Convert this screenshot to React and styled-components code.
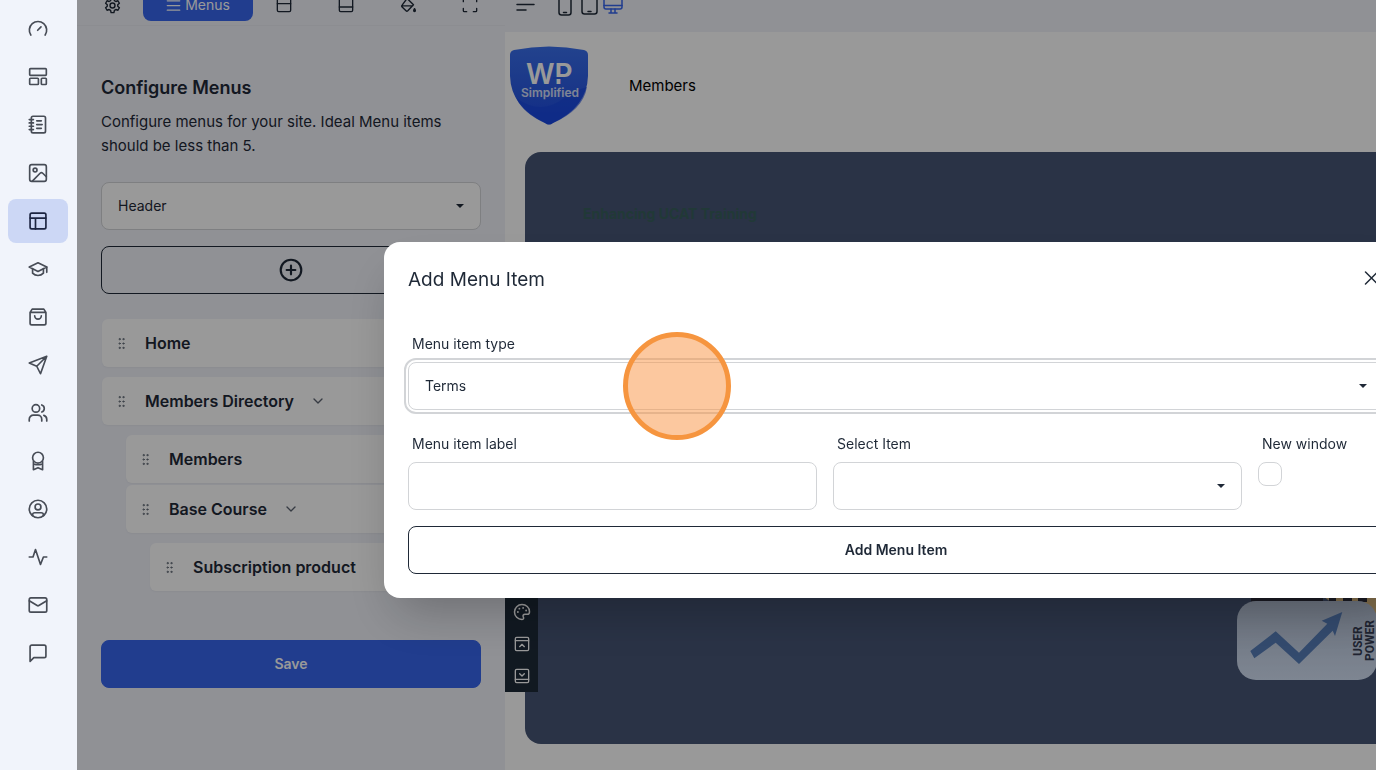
import React from 'react'
import styled, { createGlobalStyle, css } from 'styled-components'
import { GripVertical, ChevronDown } from 'lucide-react'

const GlobalStyle = createGlobalStyle`
  *, *::before, *::after {
    box-sizing: border-box;
  }

  body {
    margin: 0;
    overflow: hidden;
    color: #1f2937;
    background: #f0f2f9;
    font-family: Inter, 'Liberation Sans', sans-serif;
    font-size: 14px;
    line-height: 20px;
  }

  button, input, select {
    font: inherit;
    color: inherit;
  }

  h1, h2, p, ul {
    margin: 0;
    padding: 0;
  }

  ul {
    list-style: none;
  }
`

const Page = styled.div`
  display: flex;
  height: 100vh;
  overflow: hidden;
`

/* Sidebar */

const Sidebar = styled.nav`
  position: relative;
  z-index: 2;
  display: flex;
  flex-direction: column;
  flex: none;
  gap: 4px;
  width: 77px;
  padding: 7px 9px 0 8px;
  background: #f1f4fb;
`

const SidebarLink = styled.a`
  display: flex;
  align-items: center;
  justify-content: center;
  height: 44px;
  border-radius: 8px;
  color: ${({ $active }) => ($active ? '#1c2541' : '#474c56')};
  background: ${({ $active }) => ($active ? '#ccd7f5' : 'transparent')};
`

/* Settings panel */

const Panel = styled.section`
  flex: none;
  width: 428px;
  background: #f0f2f9;
`

const Tabs = styled.div`
  display: flex;
  align-items: flex-end;
  height: 26px;
  padding: 0 4px 4px;
  border-bottom: 1px solid #e9ebf2;
`

const TabButton = styled.button`
  display: flex;
  flex: 1;
  align-items: center;
  justify-content: center;
  height: 32px;
  padding: 0;
  border: 0;
  border-radius: 8px;
  background: none;

  ${({ $active }) => $active && css`
    flex: 0 0 110px;
    gap: 4px;
    color: #fff;
    background: #3766ed;
  `}
`

const PanelBody = styled.div`
  display: flex;
  flex-direction: column;
  padding: 50px 24px 24px;
`

const PanelTitle = styled.h1`
  font-size: 18px;
  line-height: 24px;
  font-weight: 600;
`

const PanelText = styled.p`
  margin: 10px 0 24px;
  font-size: 15px;
  line-height: 24px;
`

const PanelActions = styled.div`
  display: flex;
  flex-direction: column;
  gap: 16px;
`

const Button = styled.button`
  display: flex;
  align-items: center;
  justify-content: center;
  width: 100%;
  height: 48px;
  padding: 0 16px;
  border: 1px solid ${({ $primary }) => ($primary ? '#3766ed' : '#1f2937')};
  border-radius: 8px;
  color: ${({ $primary }) => ($primary ? '#fff' : '#1f2937')};
  background: ${({ $primary }) => ($primary ? '#3766ed' : 'transparent')};
  font-weight: 600;
`

const MenuList = styled.ul`
  display: flex;
  flex-direction: column;
  gap: ${({ $nested }) => ($nested ? '2px' : '10px')};
  padding: ${({ $nested }) => ($nested ? '10px 0 0 24px' : '25px 1px 49px')};
`

const MenuRow = styled.div`
  display: flex;
  align-items: center;
  height: 48px;
  padding: 0 12px;
  border-radius: 6px;
  background: #fff;
  font-size: 16px;
  font-weight: 600;
  box-shadow: 0 1px 2px rgba(0, 0, 0, 0.04);

  svg:first-child {
    margin-right: 16px;
  }

  svg:last-child:not(:first-child) {
    margin-left: 16px;
  }
`

/* Form controls */

const SelectBox = styled.div`
  display: grid;
  align-items: center;

  > * {
    grid-area: 1 / 1;
  }

  &::after {
    content: '';
    grid-area: 1 / 1;
    justify-self: end;
    margin-right: 17px;
    border: 4px solid transparent;
    border-top-color: #1f2937;
    border-bottom-width: 0;
    pointer-events: none;
  }
`

const field = css`
  width: 100%;
  height: 48px;
  padding: 0 16px;
  border: 1px solid #d2d4d7;
  border-radius: 8px;
  background: #fff;
`

const Select = styled.select`
  ${field}
  appearance: none;
  outline: ${({ $focused }) => ($focused ? '2px solid #d2d4d7' : 'none')};
  outline-offset: 2px;
`

const Input = styled.input`
  ${field}
`

const Checkbox = styled.input`
  appearance: none;
  display: block;
  width: 24px;
  height: 24px;
  margin: 0;
  border: 1px solid #d2d4d7;
  border-radius: 8px;
  background: #fff;
`

const Label = styled.label`
  display: block;
  padding: 8px 4px;
`

/* Site preview */

const Preview = styled.main`
  flex: 1;
  min-width: 0;
`

const DeviceBar = styled.div`
  display: flex;
  align-items: flex-end;
  height: 32px;
  padding: 0 10px 16px;
`

const DeviceButton = styled.button`
  display: flex;
  padding: 0;
  border: 0;
  margin-right: ${({ $spaced }) => ($spaced ? '20px' : '0')};
  color: ${({ $active }) => ($active ? '#3766ed' : '#1f2937')};
  background: none;
`

const Canvas = styled.div`
  position: relative;
  height: 100%;
  background: #fff;
`

const SiteHeader = styled.header`
  display: flex;
  align-items: center;
  gap: 40px;
  height: 120px;
  padding: 0 4px 13px;
`

const SiteLink = styled.a`
  color: #000;
  font-size: 15px;
  text-decoration: none;
`

const Hero = styled.div`
  display: flex;
  justify-content: space-between;
  min-height: 592px;
  margin-left: 20px;
  padding: 52px 0 64px 58px;
  border-radius: 16px 0 0 16px;
  background: #465575;
`

const HeroTitle = styled.h2`
  color: #37605c;
  font-size: 14px;
  line-height: 20px;
  font-weight: 700;
`

const HeroPicture = styled.svg`
  flex: none;
  align-self: flex-end;
`

const BlockTools = styled.div`
  position: absolute;
  top: 564px;
  left: 0;
  display: flex;
  flex-direction: column;
  background: #1d2a38;
`

const BlockButton = styled.button`
  display: flex;
  align-items: center;
  justify-content: center;
  width: 33px;
  height: 32px;
  padding: 0;
  border: 0;
  color: #fff;
  background: none;
`

/* Dialog */

const Backdrop = styled.div`
  position: fixed;
  inset: 0;
  z-index: 1;
  display: flex;
  align-items: center;
  padding: 70px 0 0 384px;
  overflow: hidden;
  background: rgba(0, 0, 0, 0.4);
`

const Modal = styled.div`
  position: relative;
  flex: none;
  width: 1024px;
  padding: 24px;
  border-radius: 16px;
  background: #fff;
  box-shadow: 0 25px 50px -12px rgba(0, 0, 0, 0.25);
`

const ModalHeader = styled.div`
  display: flex;
  justify-content: space-between;
  margin-bottom: 32px;
`

const ModalTitle = styled.h2`
  font-size: 19px;
  line-height: 28px;
  font-weight: 400;
`

const CloseButton = styled.button`
  display: flex;
  align-items: center;
  justify-content: center;
  width: 24px;
  height: 24px;
  padding: 0;
  border: 0;
  background: none;
`

const FieldRow = styled.div`
  display: grid;
  grid-template-columns: 1fr 1fr 126px;
  gap: 16px;
  margin: 16px 0;
`

const ClickMarker = styled.span`
  position: absolute;
  top: 90px;
  left: 239px;
  width: 108px;
  height: 108px;
  border: 5px solid #f6953f;
  border-radius: 50%;
  background: rgba(249, 146, 64, 0.5);
  pointer-events: none;
`

const Icon = ({ size = 20, stroke = 2, children }) => (
  <svg
    width={size}
    height={size}
    viewBox='0 0 24 24'
    fill='none'
    stroke='currentColor'
    strokeWidth={stroke}
    strokeLinecap='round'
    strokeLinejoin='round'
    aria-hidden='true'
  >
    {children}
  </svg>
)

const sidebarItems = [
  { label: 'Dashboard', icon: <path d='M3.4 19.2A10.4 10.4 0 1 1 20.6 19.2M11.6 13.500l4-4' /> },
  {
    label: 'Templates',
    icon: <><rect x='2' y='2' width='20' height='8' rx='1' /><rect x='2' y='13.5' width='10.5' height='7.5' rx='1' /><rect x='16' y='13.5' width='6' height='7.5' rx='1' /></>
  },
  {
    label: 'Posts',
    icon: <><rect x='4' y='1.5' width='17' height='20' rx='2' /><path d='M1.5 5.500h5M1.5 9.500h5M1.5 13.500h5M1.5 17.500h5M10.5 7H16M10.5 11.500H17M10.5 16H16' /></>
  },
  {
    label: 'Media',
    icon: <><rect x='2' y='2' width='20' height='20' rx='2.5' /><circle cx='8.5' cy='8.5' r='2.3' /><path d='M5.5 21.5l9-9.2c1-.9 2.2-.9 3.2 0L22 16.5' /></>
  },
  {
    label: 'Site builder',
    active: true,
    icon: <><rect x='2.5' y='2.5' width='19' height='19' rx='2' /><path d='M2.5 8.5h19M9 8.5v13' /></>
  },
  {
    label: 'Courses',
    icon: <><path d='M12 4.5L1.5 9.7 12 15l10.5-5.3z' /><path d='M5.5 12v5c3.5 3.7 9.5 3.7 13 0v-5M22.5 9.7V16' /></>
  },
  {
    label: 'Store',
    icon: <><path d='M2.5 6.5L5 2.5h14l2.5 4v13a2 2 0 0 1-2 2h-15a2 2 0 0 1-2-2zM2.5 6.5h19' /><path d='M16 10.5a4 4 0 0 1-8 0' /></>
  },
  { label: 'Campaigns', icon: <path d='M22.5 1.5L1.5 9.5l9 4L15 22.5zM22.5 1.5l-12 12' /> },
  {
    label: 'Members',
    icon: <><circle cx='9.5' cy='6.5' r='4.5' /><path d='M1.5 21.5v-2a5 5 0 0 1 5-5h5a5 5 0 0 1 5 5v2M16.5 2.3a4.5 4.5 0 0 1 0 8.5M19 14.8a5 5 0 0 1 3.5 4.7v2' /></>
  },
  {
    label: 'Badges',
    icon: <><circle cx='12' cy='8' r='6.5' /><path d='M6.500 12.500v10l5.500-2.500 5.500 2.500v-10M7 15.500c2.500 1 7.500 1 10 0' /></>
  },
  {
    label: 'Account',
    icon: <><circle cx='12' cy='12' r='10.5' /><circle cx='12' cy='9.5' r='3.500' /><path d='M5.500 20v-1c0-1.500 1.200-2.500 2.700-2.500h7.600c1.500 0 2.700 1 2.700 2.500v1' /></>
  },
  { label: 'Activity', icon: <path d='M1.5 12H6L9 3l6 18 3.5-9h4' /> },
  {
    label: 'Mail',
    icon: <><rect x='1.5' y='3.5' width='21' height='17' rx='2' /><path d='M1.5 7l9.5 5.600c.6.400 1.400.400 2 0L22.500 7' /></>
  },
  { label: 'Comments', icon: <path d='M2.500 22V4.500a2 2 0 0 1 2-2h15a2 2 0 0 1 2 2v11a2 2 0 0 1-2 2H7z' /> }
]

const tabItems = [
  {
    label: 'Settings',
    icon: (
      <Icon size={17}>
        <circle cx='12' cy='12' r='3.5' />
        <path d='M10 2h4l.7 3.2 2 1.1 3-1 2 3.5-2.3 2.1v2.2l2.3 2.1-2 3.5-3-1-2 1.1L14 22h-4l-.7-3.2-2-1.1-3 1-2-3.5 2.3-2.1v-2.2L2.3 8.8l2-3.500 3 1 2-1.100z' />
      </Icon>
    )
  },
  { label: 'Menus', active: true, icon: <Icon size={15}><path d='M2 4.500h20M2 12h20M2 19.500h20' /></Icon> },
  { label: 'Header', icon: <Icon size={16}><rect x='2' y='0' width='20' height='22' rx='2' /><path d='M2 10h20' /></Icon> },
  { label: 'Footer', icon: <Icon size={16}><rect x='2' y='0' width='20' height='22' rx='2' /><path d='M2 15h20' /></Icon> },
  {
    label: 'Colors',
    icon: (
      <Icon size={17}>
        <path d='M10 2l9 9-8 8.5c-.8.8-1.7.8-2.5 0L3 14c-.8-.8-.8-1.7 0-2.5zM3 12.5h15' />
        <path d='M20.5 16.500c1.500 2.500 1.500 4 0 4s-1.500-1.500 0-4z' fill='currentColor' />
      </Icon>
    )
  },
  {
    label: 'Full screen',
    icon: <Icon size={16}><path d='M2 7V3.500A1.500 1.500 0 0 1 3.500 2H7M17 2h3.500A1.500 1.500 0 0 1 22 3.500V7M22 17v3.500a1.500 1.500 0 0 1-1.500 1.500H17M7 22H3.500A1.500 1.500 0 0 1 2 20.500V17' /></Icon>
  }
]

const menus = [
  { label: 'Home' },
  {
    label: 'Members Directory',
    children: [
      { label: 'Members' },
      { label: 'Base Course', children: [{ label: 'Subscription product' }] }
    ]
  }
]

const MenuItems = ({ items, nested }) => (
  <MenuList $nested={nested}>
    {items.map(({ label, children }) => (
      <li key={label}>
        <MenuRow>
          <GripVertical size={15} strokeWidth={1.5} color='#5b6370' />
          {label}
          {children && <ChevronDown size={16} strokeWidth={2} color='#5b6370' />}
        </MenuRow>
        {children && <MenuItems items={children} nested />}
      </li>
    ))}
  </MenuList>
)

const Logo = () => (
  <svg width='80' height='80' viewBox='0 0 80 80' role='img' aria-label='WP Simplified'>
    <defs>
      <linearGradient id='shield' x1='0' y1='0' x2='0' y2='1'>
        <stop offset='0' stopColor='#3a6fec' />
        <stop offset='0.6' stopColor='#2a5ae2' />
        <stop offset='1' stopColor='#1a48e4' />
      </linearGradient>
    </defs>
    <path d='M5 4Q40-3 75 4q4 1 4 5v21q-1 31-35 47-4 3-8 0Q2 61 1 30V9q0-4 4-5z' fill='url(#shield)' />
    <path d='M7 52q25 18 48 0 12-8 23-11-4 23-34 36-4 3-8 0Q15 68 7 52z' fill='#1746e0' opacity='0.6' />
    <g fill='#fff' fontFamily='Inter, sans-serif'>
      <text x='17' y='38' fontSize='28' fontWeight='600'>WP</text>
      <text x='12' y='51' fontSize='12' fontWeight='600' opacity='0.8'>Simplified</text>
    </g>
    <path d='M44 32h10' stroke='#2a5ae2' strokeWidth='2' />
  </svg>
)

const GrowthPicture = () => (
  <HeroPicture width='139' height='84' viewBox='0 0 139 84' role='img' aria-label='User power'>
    <defs>
      <linearGradient id='tile' x1='0' y1='0' x2='0' y2='1'>
        <stop offset='0' stopColor='#b3bfd3' />
        <stop offset='1' stopColor='#d2dff3' />
      </linearGradient>
    </defs>
    <path d='M86 0h53v24h-22z' fill='#d8b77e' />
    <path d='M14 4h72M92 4h7M106 4h9M121 4h9' stroke='#2b2b38' strokeWidth='4' />
    <rect x='0' y='5' width='140' height='79' rx='19' fill='url(#tile)' />
    <path d='M13.3 55L38.7 35.3 62 56.7 90.3 27.7 84.7 24.7 105.3 16 98 40 95.7 34.7 62 68 38.7 46.7 17.3 62.3z' fill='#567db8' />
    <g fill='#353c52' fontFamily='Roboto, sans-serif' fontSize='12' fontWeight='700'>
      <text transform='translate(125 60) rotate(-90)'>USER</text>
      <text transform='translate(137 65) rotate(-90)'>POWER</text>
    </g>
  </HeroPicture>
)

const App = () => (
  <Page>
    <GlobalStyle />
    <Sidebar>
      {sidebarItems.map(({ label, icon, active }) => (
        <SidebarLink key={label} href='#' aria-label={label} $active={active}>
          <Icon>{icon}</Icon>
        </SidebarLink>
      ))}
    </Sidebar>

    <Panel>
      <Tabs>
        {tabItems.map(({ label, icon, active }) => (
          <TabButton key={label} type='button' aria-label={label} $active={active}>
            {icon}
            {active && label}
          </TabButton>
        ))}
      </Tabs>
      <PanelBody>
        <PanelTitle>Configure Menus</PanelTitle>
        <PanelText>Configure menus for your site. Ideal Menu items should be less than 5.</PanelText>
        <PanelActions>
          <SelectBox>
            <Select aria-label='Menu location' defaultValue='Header'>
              <option>Header</option>
              <option>Footer</option>
            </Select>
          </SelectBox>
          <Button type='button' aria-label='Add menu item'>
            <Icon size={26}><circle cx='12' cy='12' r='9.5' /><path d='M12 8v8M8 12h8' /></Icon>
          </Button>
        </PanelActions>
        <MenuItems items={menus} />
        <Button type='button' $primary>Save</Button>
      </PanelBody>
    </Panel>

    <Preview>
      <DeviceBar>
        <DeviceButton type='button' aria-label='Align' $spaced>
          <svg width='22' height='22' viewBox='0 0 22 22' fill='none' stroke='currentColor' strokeWidth='1.5' strokeLinecap='round'>
            <path d='M2 5h17M2 10.5h17M2 16h9' />
          </svg>
        </DeviceButton>
        <DeviceButton type='button' aria-label='Phone'>
          <svg width='24' height='24' viewBox='0 0 24 24' fill='none' stroke='currentColor' strokeWidth='1.5' strokeLinecap='round'>
            <rect x='2' y='1' width='12' height='22' rx='2.5' /><path d='M6.5 20.5h3' />
          </svg>
        </DeviceButton>
        <DeviceButton type='button' aria-label='Tablet'>
          <svg width='22' height='24' viewBox='0 0 22 24' fill='none' stroke='currentColor' strokeWidth='1.5' strokeLinecap='round'>
            <rect x='1' y='0' width='15' height='22' rx='2.5' /><path d='M7 19.5h3' />
          </svg>
        </DeviceButton>
        <DeviceButton type='button' aria-label='Desktop' $active>
          <svg width='20' height='24' viewBox='0 0 20 24' fill='none' stroke='currentColor' strokeWidth='1.5' strokeLinecap='round'>
            <rect x='1' y='2' width='18' height='15' rx='2' /><path d='M1 13.5h18M8 17v4M12 17v4M6 21h8' />
          </svg>
        </DeviceButton>
      </DeviceBar>
      <Canvas>
        <SiteHeader>
          <Logo />
          <SiteLink href='#'>Members</SiteLink>
        </SiteHeader>
        <Hero>
          <HeroTitle>Enhancing UCAT Training</HeroTitle>
          <GrowthPicture />
        </Hero>
        <BlockTools>
          <BlockButton type='button' aria-label='Palette'>
            <Icon size={18}>
              <path d='M12 2a10 10 0 0 0 0 20c2.5 0 2.5-2 1.7-3.5-1-2 .3-3.5 2.3-3.5h3c2 0 3-1.2 3-3.5C22 6 17.5 2 12 2z' />
              <path d='M6.5 12v.01M8.5 7.5v.01M13.5 6.5v.01M17.5 10v.01' strokeWidth='2.5' />
            </Icon>
          </BlockButton>
          <BlockButton type='button' aria-label='Insert above'>
            <Icon size={16}><rect x='2' y='2' width='20' height='20' rx='2' /><path d='M2 7h20M8.5 16l3.5-3.5 3.5 3.5' /></Icon>
          </BlockButton>
          <BlockButton type='button' aria-label='Insert below'>
            <Icon size={16}><rect x='2' y='2' width='20' height='20' rx='2' /><path d='M2 17h20M8.5 8.5L12 12l3.5-3.5' /></Icon>
          </BlockButton>
        </BlockTools>
      </Canvas>
    </Preview>

    <Backdrop>
      <Modal role='dialog' aria-labelledby='dialog-title'>
        <ModalHeader>
          <ModalTitle id='dialog-title'>Add Menu Item</ModalTitle>
          <CloseButton type='button' aria-label='Close'>
            <Icon size={24} stroke={1.5}><path d='M5.5 6l12 12M17.5 6l-12 12' /></Icon>
          </CloseButton>
        </ModalHeader>
        <Label htmlFor='item-type'>Menu item type</Label>
        <SelectBox>
          <Select id='item-type' defaultValue='Terms' $focused>
            <option>Terms</option>
            <option>Page</option>
          </Select>
        </SelectBox>
        <FieldRow>
          <div>
            <Label htmlFor='item-label'>Menu item label</Label>
            <Input id='item-label' type='text' />
          </div>
          <div>
            <Label htmlFor='item-target'>Select Item</Label>
            <SelectBox>
              <Select id='item-target'>
                <option value='' />
              </Select>
            </SelectBox>
          </div>
          <div>
            <Label htmlFor='new-window'>New window</Label>
            <Checkbox id='new-window' type='checkbox' />
          </div>
        </FieldRow>
        <Button type='button'>Add Menu Item</Button>
        <ClickMarker />
      </Modal>
    </Backdrop>
  </Page>
)

export default App
